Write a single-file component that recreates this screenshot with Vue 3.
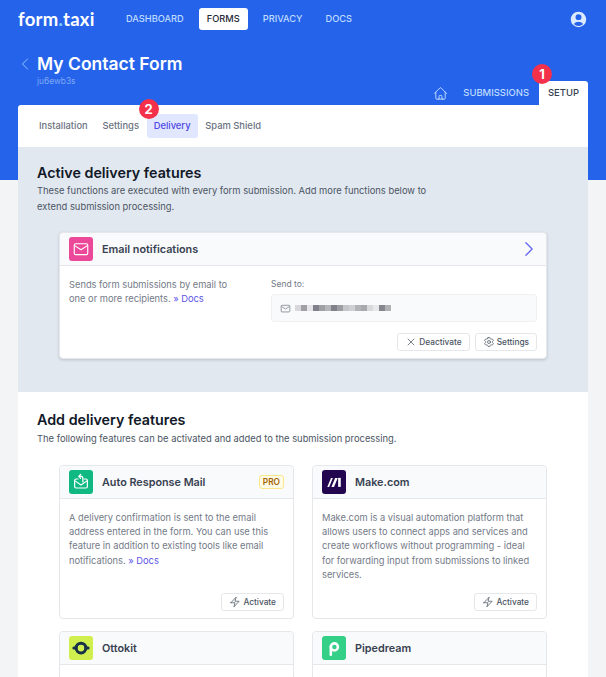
<template>
  <div class="page">
    <div class="hero">
      <header class="topbar">
        <div class="logo">form<span class="dot">.</span>taxi</div>
        <nav class="mainnav">
          <a v-for="n in mainNav" :key="n" class="navlink" :class="{ active: n === 'FORMS' }">{{ n }}</a>
        </nav>
        <svg class="avatar" viewBox="0 0 24 24" fill="currentColor">
          <path fill-rule="evenodd" d="M18.685 19.097A9.723 9.723 0 0 0 21.75 12c0-5.385-4.365-9.75-9.75-9.75S2.25 6.615 2.25 12a9.723 9.723 0 0 0 3.065 7.097A9.716 9.716 0 0 0 12 21.75a9.716 9.716 0 0 0 6.685-2.653Zm-12.54-1.285A7.486 7.486 0 0 1 12 15a7.486 7.486 0 0 1 5.855 2.812A8.224 8.224 0 0 1 12 20.25a8.224 8.224 0 0 1-5.855-2.438ZM15.75 9a3.75 3.75 0 1 1-7.5 0 3.75 3.75 0 0 1 7.5 0Z" clip-rule="evenodd" />
        </svg>
      </header>
      <div class="titlerow">
        <svg class="back" viewBox="0 0 24 24" fill="none" stroke="currentColor" stroke-width="1.5">
          <path stroke-linecap="round" stroke-linejoin="round" d="M15.75 19.5 8.25 12l7.5-7.5" />
        </svg>
        <div>
          <h1>My Contact Form</h1>
          <div class="formid">ju6ewb3s</div>
        </div>
      </div>
      <div class="sidetabs">
        <svg class="home" viewBox="0 0 24 24" fill="none" stroke="currentColor" stroke-width="1.5">
          <path stroke-linecap="round" stroke-linejoin="round" d="m2.25 12 8.954-8.955c.44-.439 1.152-.439 1.591 0L21.75 12M4.5 9.75v10.125c0 .621.504 1.125 1.125 1.125H9.75v-4.875c0-.621.504-1.125 1.125-1.125h2.25c.621 0 1.125.504 1.125 1.125V21h4.125c.621 0 1.125-.504 1.125-1.125V9.75M8.25 21h8.25" />
        </svg>
        <a class="sidetab">SUBMISSIONS</a>
        <a class="sidetab current">SETUP<span class="marker marker-one">1</span></a>
      </div>
    </div>

    <main class="sheet">
      <div class="subtabs">
        <a v-for="t in subTabs" :key="t" class="subtab" :class="{ active: t === 'Delivery' }">
          {{ t }}
          <span v-if="t === 'Delivery'" class="marker marker-two">2</span>
        </a>
      </div>

      <section class="active-block">
        <h2>Active delivery features</h2>
        <p class="lead">These functions are executed with every form submission. Add more functions below to extend submission processing.</p>

        <div class="card email-card">
          <div class="card-head">
            <span class="tile pink">
              <svg viewBox="0 0 24 24" fill="none" stroke="currentColor" stroke-width="1.5">
                <rect x="3" y="5" width="18" height="14.5" rx="2" />
                <path d="M3.5 7.5 12 13l8.5-5.5" stroke-linejoin="round" />
              </svg>
            </span>
            <span class="card-title">Email notifications</span>
            <svg class="chevron" viewBox="0 0 24 24" fill="none" stroke="currentColor" stroke-width="1.5">
              <path stroke-linecap="round" stroke-linejoin="round" d="m8.25 4.5 7.5 7.5-7.5 7.5" />
            </svg>
          </div>
          <div class="email-body">
            <p class="text">Sends form submissions by email to one or more recipients. <a class="docs">» Docs</a></p>
            <div class="send">
              <label>Send to:</label>
              <div class="field">
                <svg class="field-icon" viewBox="0 0 24 24" fill="none" stroke="currentColor" stroke-width="1.5">
                  <rect x="2.5" y="5" width="19" height="14.5" rx="2" />
                  <path d="M3 7.5 12 13l9-5.5" stroke-linejoin="round" />
                </svg>
                <span class="blur">
                  <i v-for="(c, i) in blurBlocks" :key="i" :style="{ background: c }"></i>
                </span>
              </div>
            </div>
          </div>
          <div class="card-actions">
            <button>
              <svg viewBox="0 0 24 24" fill="none" stroke="currentColor" stroke-width="1.5">
                <path stroke-linecap="round" stroke-linejoin="round" d="M6 18 18 6M6 6l12 12" />
              </svg>
              Deactivate
            </button>
            <button>
              <svg viewBox="0 0 24 24" fill="none" stroke="currentColor" stroke-width="1.5">
                <path stroke-linecap="round" stroke-linejoin="round" d="M9.594 3.94c.09-.542.56-.94 1.11-.94h2.593c.55 0 1.02.398 1.11.94l.213 1.281c.063.374.313.686.645.87.074.04.147.083.22.127.325.196.72.257 1.075.124l1.217-.456a1.125 1.125 0 0 1 1.37.49l1.296 2.247a1.125 1.125 0 0 1-.26 1.431l-1.003.827c-.293.241-.438.613-.43.992a7.723 7.723 0 0 1 0 .255c-.008.378.137.75.43.991l1.004.827c.424.35.534.955.26 1.43l-1.298 2.247a1.125 1.125 0 0 1-1.369.491l-1.217-.456c-.355-.133-.75-.072-1.076.124a6.47 6.47 0 0 1-.22.128c-.331.183-.581.495-.644.869l-.213 1.281c-.09.543-.56.94-1.11.94h-2.594c-.55 0-1.019-.398-1.11-.94l-.213-1.281c-.062-.374-.312-.686-.644-.87a6.52 6.52 0 0 1-.22-.127c-.325-.196-.72-.257-1.076-.124l-1.217.456a1.125 1.125 0 0 1-1.369-.49l-1.297-2.247a1.125 1.125 0 0 1 .26-1.431l1.004-.827c.292-.24.437-.613.43-.991a6.932 6.932 0 0 1 0-.255c.007-.38-.138-.751-.43-.992l-1.004-.827a1.125 1.125 0 0 1-.26-1.43l1.297-2.247a1.125 1.125 0 0 1 1.37-.491l1.216.456c.356.133.751.072 1.076-.124.072-.044.146-.086.22-.128.332-.183.582-.495.644-.869l.214-1.28Z" />
                <path stroke-linecap="round" stroke-linejoin="round" d="M15 12a3 3 0 1 1-6 0 3 3 0 0 1 6 0Z" />
              </svg>
              Settings
            </button>
          </div>
        </div>
      </section>

      <section class="add-block">
        <h2>Add delivery features</h2>
        <p class="lead">The following features can be activated and added to the submission processing.</p>

        <div class="grid">
          <div v-for="f in features" :key="f.name" class="card feature">
            <div class="card-head">
              <span class="tile" :class="f.tile">
                <svg v-if="f.tile === 'green'" viewBox="0 0 24 24" fill="none" stroke="currentColor" stroke-width="1.6" stroke-linecap="round" stroke-linejoin="round">
                  <path d="M8 8H5.5a2 2 0 0 0-2 2v8a2 2 0 0 0 2 2h13a2 2 0 0 0 2-2v-8a2 2 0 0 0-2-2H16" />
                  <path d="m4 10.5 8 5.500 8-5.500" />
                  <path d="M14.5 12V6.500a2 2 0 0 0-2-2H9M11.500 2 9 4.500 11.500 7" />
                </svg>
                <svg v-else-if="f.tile === 'make'" viewBox="0 0 24 24" fill="#fff">
                  <path d="M3 18.5 8 6.500h2.500l-5 12Z" />
                  <path d="M8.5 18.5l5-12H17l-5 12Z" />
                  <path d="M17.500 6.500H21v12h-3.500Z" />
                </svg>
                <svg v-else-if="f.tile === 'lime'" viewBox="0 0 24 24" fill="none">
                  <circle cx="12" cy="12" r="6.5" stroke="#17304a" stroke-width="4" />
                  <path d="M2.5 12h3M18.500 12h3" stroke="#17304a" stroke-width="4" stroke-linecap="round" />
                </svg>
                <svg v-else viewBox="0 0 24 24" fill="none" stroke="#fff" stroke-width="3.4">
                  <circle cx="12.5" cy="10.5" r="4.7" />
                  <path d="M7.8 10v11" stroke-linecap="round" />
                </svg>
              </span>
              <span class="card-title">{{ f.name }}</span>
              <span v-if="f.pro" class="pro">PRO</span>
            </div>
            <template v-if="f.text">
              <p class="text feature-text">{{ f.text }} <a v-if="f.docs" class="docs">» Docs</a></p>
              <div class="card-actions">
                <button>
                  <svg viewBox="0 0 24 24" fill="none" stroke="currentColor" stroke-width="1.5">
                    <path stroke-linecap="round" stroke-linejoin="round" d="m3.75 13.5 10.5-11.25L12 10.5h8.25L9.75 21.75 12 13.5H3.75Z" />
                  </svg>
                  Activate
                </button>
              </div>
            </template>
          </div>
        </div>
      </section>
    </main>
  </div>
</template>

<script setup>
const mainNav = ['DASHBOARD', 'FORMS', 'PRIVACY', 'DOCS']
const subTabs = ['Installation', 'Settings', 'Delivery', 'Spam Shield']

const blurBlocks = [
  '#d8d8da', '#a0a0a5', '#e5e5e8', '#7f8089', '#9fa0a6', '#b5b6ba', '#80818a', '#9d9ea4',
  '#c5c6c9', '#cfd0d3', '#b3b4b8', '#a8a9ae', '#d8d9db', '#e8e9ea', '#85868e', '#b0b1b5'
]

const features = [
  {
    name: 'Auto Response Mail',
    tile: 'green',
    pro: true,
    docs: true,
    text: 'A delivery confirmation is sent to the email address entered in the form. You can use this feature in addition to existing tools like email notifications.'
  },
  {
    name: 'Make.com',
    tile: 'make',
    text: 'Make.com is a visual automation platform that allows users to connect apps and services and create workflows without programming - ideal for forwarding input from submissions to linked services.'
  },
  { name: 'Ottokit', tile: 'lime' },
  { name: 'Pipedream', tile: 'pipe' }
]
</script>

<style>
html, body {
  margin: 0;
  background: #f3f4f6;
}
</style>

<style scoped>
.page {
  width: 606px;
  height: 677px;
  overflow: hidden;
  position: relative;
  font-family: Inter, "Liberation Sans", sans-serif;
  background: #f3f4f6;
}

.hero {
  height: 180px;
  background: #2563eb;
  margin-bottom: -75px;
}

.topbar {
  height: 38px;
  display: flex;
  align-items: center;
  padding: 0 18px;
}

.logo {
  font-family: Lato, sans-serif;
  font-size: 18.5px;
  font-weight: 700;
  color: #fff;
  width: 100px;
  letter-spacing: 0.25px;
}

.dot {
  color: #7dd3fc;
}

.mainnav {
  display: flex;
  gap: 7px;
  flex: 1;
}

.navlink {
  padding: 0 8px;
  height: 22px;
  line-height: 22px;
  font-size: 9.25px;
  font-weight: 500;
  color: #bfdbfe;
  border-radius: 3px;
}

.navlink.active {
  background: #fff;
  color: #1f2937;
}

.avatar {
  width: 19px;
  height: 19px;
  color: #dbeafe;
}

.titlerow {
  display: flex;
  align-items: flex-start;
  padding: 13px 0 0 18px;
  height: 30px;
}

.back {
  width: 16px;
  height: 16px;
  color: #93c5fd;
  margin: 5px 4px 0 -1px;
}

h1 {
  margin: 0;
  font-size: 17.5px;
  line-height: 26px;
  font-weight: 600;
  color: #fff;
}

.formid {
  font-size: 8.4px;
  line-height: 10px;
  margin-top: -1px;
  color: #7fa9f5;
}

.sidetabs {
  display: flex;
  justify-content: flex-end;
  align-items: center;
  margin: 0 18px 0 0;
  height: 24px;
}

.home {
  width: 15px;
  height: 15px;
  color: #bfdbfe;
  margin-right: 15px;
}

.sidetab {
  font-size: 9.45px;
  font-weight: 500;
  color: #bfdbfe;
  height: 24px;
  line-height: 24px;
  position: relative;
  margin-right: 10px;
}

.sidetab.current {
  background: #fff;
  color: #374151;
  border-radius: 3px 3px 0 0;
  padding: 0 9px;
  margin-right: 0;
}

.marker {
  position: absolute;
  width: 20px;
  height: 20px;
  border-radius: 50%;
  background: #f5304a;
  color: #fff;
  font-size: 13px;
  font-weight: 700;
  line-height: 20px;
  text-align: center;
}

.marker-one {
  left: -7px;
  top: -17px;
}

.marker-two {
  left: -8px;
  top: -15px;
}

.sheet {
  margin: 0 18px;
  width: 570px;
  background: #fff;
  border-radius: 3px 0 0 0;
  position: relative;
}

.subtabs {
  height: 42px;
  padding: 0 14px;
  display: flex;
  align-items: center;
  gap: 0.7px;
}

.subtab {
  position: relative;
  height: 24px;
  line-height: 24px;
  padding: 0 7px;
  font-size: 9.4px;
  font-weight: 500;
  color: #6b7280;
  border-radius: 3px;
}

.subtab.active {
  background: #e0e7ff;
  color: #4f46e5;
}

section {
  padding: 17px 19px 0;
}

.active-block {
  background: #e2e8f0;
  height: 245px;
  box-sizing: border-box;
}

h2 {
  margin: 0;
  font-size: 14.3px;
  line-height: 18px;
  font-weight: 600;
  color: #111827;
}

.lead {
  margin: 1px 0 0;
  font-size: 9.4px;
  line-height: 16px;
  color: #4b5563;
  width: 400px;
}

.add-block {
  padding-top: 19px;
  height: 300px;
  box-sizing: border-box;
}

.add-block .lead {
  width: auto;
  margin-top: 2px;
}

.card {
  background: #fff;
  border: 1px solid #e5e7eb;
  border-radius: 4px;
  box-sizing: border-box;
}

.card-head {
  height: 32px;
  display: flex;
  align-items: center;
  padding: 0 9px;
  background: #f9fafb;
  border-bottom: 1px solid #e5e7eb;
  border-radius: 4px 4px 0 0;
}

.tile {
  width: 24px;
  height: 24px;
  border-radius: 3px;
  display: flex;
  align-items: center;
  justify-content: center;
  color: #fff;
  margin-right: 9px;
  flex: none;
}

.tile svg {
  width: 18px;
  height: 18px;
}

.pink { background: #ec4899; }
.green { background: #10b981; }
.make { background: #22064f; }
.lime { background: #d0ee4e; }
.pipe { background: #34d088; }

.card-title {
  font-size: 10.8px;
  font-weight: 600;
  color: #374151;
  flex: 1;
}

.chevron {
  width: 20px;
  height: 20px;
  color: #6366f1;
  margin-right: -2px;
}

.email-card {
  margin: 17px 22px 0;
  height: 127px;
  box-shadow: 0 1px 3px rgba(15, 23, 42, 0.18);
}

.email-body {
  display: flex;
  padding: 12px 9px 0;
}

.text {
  margin: 0;
  font-size: 9.3px;
  line-height: 14.2px;
  color: #737a87;
}

.email-body .text {
  width: 172px;
  margin-right: 30px;
}

.docs {
  color: #5b54e8;
}

.send {
  flex: 1;
}

.send label {
  display: block;
  font-size: 8.5px;
  line-height: 12px;
  color: #737a87;
  margin-bottom: 4px;
}

.field {
  height: 28px;
  background: #f9fafb;
  border: 1px solid #f0f1f3;
  border-radius: 3px;
  display: flex;
  align-items: center;
  padding: 0 8px;
  box-sizing: border-box;
}

.field-icon {
  width: 11px;
  height: 11px;
  color: #6b7280;
  margin-right: 4px;
}

.blur {
  display: flex;
}

.blur i {
  width: 6px;
  height: 6px;
}

.card-actions {
  display: flex;
  justify-content: flex-end;
  gap: 5px;
  padding: 0 9px;
}

.email-card .card-actions {
  margin-top: 11px;
}

button {
  display: flex;
  align-items: center;
  gap: 2px;
  height: 18px;
  padding: 0 7px;
  background: #fff;
  border: 1px solid #e5e7eb;
  border-radius: 3px;
  font-family: inherit;
  font-size: 8.3px;
  font-weight: 500;
  color: #4b5563;
}

button svg {
  width: 12px;
  height: 12px;
}

.grid {
  display: grid;
  grid-template-columns: 235px 235px;
  column-gap: 18px;
  row-gap: 12px;
  margin: 18px 22px 0;
}

.feature {
  min-height: 154px;
  display: flex;
  flex-direction: column;
}

.feature-text {
  padding: 12px 9px 0;
  flex: 1;
}

.feature .card-actions {
  padding-bottom: 7px;
}

.pro {
  font-size: 8.3px;
  font-weight: 600;
  line-height: 12px;
  color: #a16207;
  background: #fefce8;
  border: 1px solid #fde68a;
  border-radius: 3px;
  padding: 0 3px;
}
</style>
